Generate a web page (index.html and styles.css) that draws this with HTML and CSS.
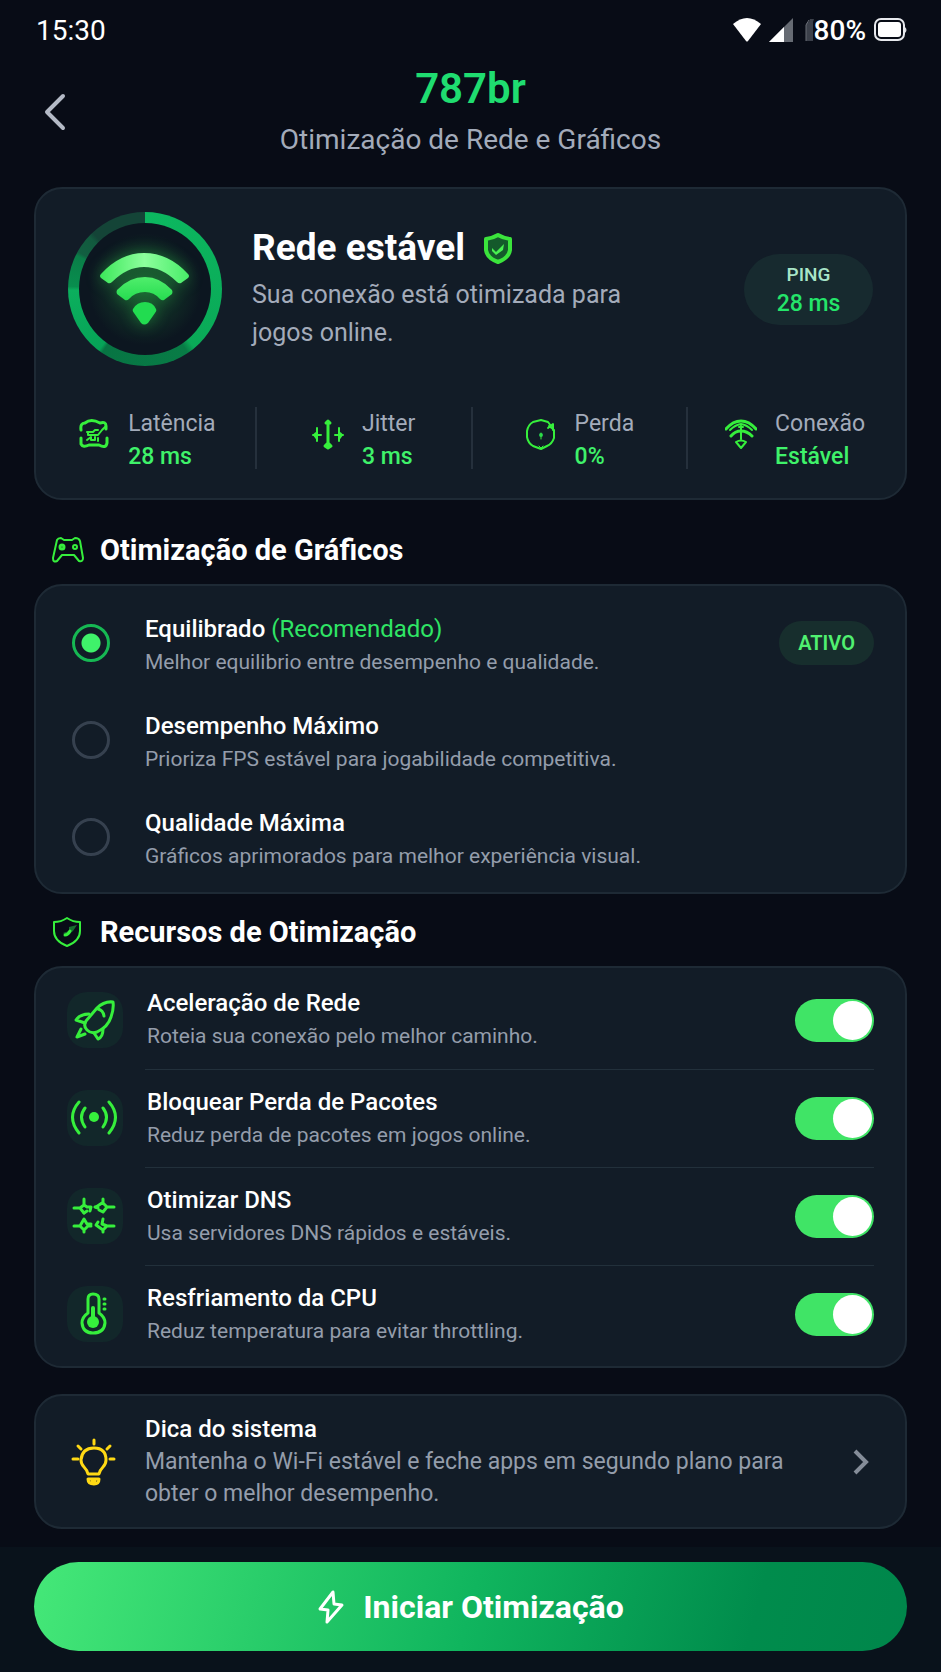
FILE: index.html
```html
<!DOCTYPE html>
<html lang="pt-BR">
<head>
  <meta charset="UTF-8" />
  <meta name="viewport" content="width=device-width, initial-scale=1.0"/>
  <title>787br</title>
  <meta name="theme-color" content="#070b14">
  <link rel="stylesheet" href="styles.css">
</head>
<body>
  <div class="status-bar">
    <span>15:30</span>
    <div class="status-icons">
      <svg class="status-wifi" width="30" height="26" viewBox="0 0 30 26"><path d="M1 7Q15-5 29 7L16 24Q15 25 14 24Z" fill="#fff"/></svg>
      <svg class="status-signal" width="24" height="24" viewBox="0 0 24 24"><path d="M0 24L24 0V24Z" fill="#666b73"/><path d="M0 24L15 9V24Z" fill="#fff"/></svg>
      <svg width="9" height="24" viewBox="0 0 9 24"><path d="M9 1L5 1L4 4Q1 4 1 7V23H8V4Z" fill="#3b404a"/><path d="M1 23V7L4 2" stroke="#686c75" fill="none"/></svg>
      <span>80%</span>
      <svg class="status-battery" width="33" height="24" viewBox="0 0 33 24"><rect x="1" y="1" width="29" height="21" rx="6" fill="none" stroke="#e8eaee" stroke-width="2"/><rect x="4" y="4" width="23" height="15" rx="3" fill="#fff"/><path d="M31 9Q34 12 31 15Z" fill="#dde0e5"/></svg>
    </div>
  </div>

  <header class="header">
    <button class="back" type="button" aria-label="Voltar">
      <svg width="24" height="38" viewBox="0 0 24 38"><path d="M20 3L4 19L20 35" fill="none" stroke="#b4bac6" stroke-width="4" stroke-linecap="round" stroke-linejoin="round"/></svg>
    </button>
    <div class="header-text">
      <h1>787br</h1>
      <p>Otimização de Rede e Gráficos</p>
    </div>
  </header>

  <main>
    <section class="card network">
      <div class="network-top">
        <div class="ring">
          <div class="ring-inner">
            <svg class="wifi" width="90" height="74" viewBox="0 0 90 74">
              <defs>
                <linearGradient id="wifi-top"><stop offset="0" stop-color="#3ce85a"/><stop offset="0.5" stop-color="#8dff9d"/><stop offset="1" stop-color="#48ec68"/></linearGradient>
                <linearGradient id="wifi-mid" x2="0" y2="1"><stop offset="0" stop-color="#50ee6c"/><stop offset="1" stop-color="#26dc50"/></linearGradient>
              </defs>
              <path d="M1 22Q20 1 44 1Q69 1 88 22Q90 24 88 26L81 31Q79 32 77 30Q62 15 44 15Q27 15 12 30Q10 32 8 31L1 26Q-1 24 1 22Z" fill="url(#wifi-top)"/>
              <path d="M17 38Q29 25 45 25Q60 25 72 38Q73 40 72 42L64 48Q62 49 60 47Q54 40 45 40Q35 40 29 47Q27 49 25 48L17 42Q16 40 17 38Z" fill="url(#wifi-mid)"/>
              <path d="M33 57Q37 50 45 50Q53 50 56 57Q57 59 55 61L48 71Q44 74 41 71L34 61Q32 59 33 57Z" fill="#22dc50"/>
            </svg>
          </div>
        </div>
        <div class="network-text">
          <h2>Rede estável
            <svg width="30" height="33" viewBox="0 0 30 33"><path d="M15 2Q20 5 28 6V18Q27 27 15 31Q3 27 2 18V6Q10 5 15 2Z" fill="#145a2b"/><path d="M15 3Q20 6 27 7V18Q26 26 15 30Q4 26 3 18V7Q10 6 15 3Z" fill="none" stroke="#3be43c" stroke-width="4" stroke-linejoin="round"/><path d="M9 16L13 20L21 12L20 18L13 23L9 19Z" fill="#48f050"/></svg>
          </h2>
          <p>Sua conexão está otimizada para jogos online.</p>
        </div>
        <div class="ping">
          <span>PING</span>
          <strong>28 ms</strong>
        </div>
      </div>
      <dl class="stats">
        <div class="stat">
          <svg width="32" height="32" viewBox="0 0 32 32" class="icon"><path d="M3 12Q2 5 7 5Q13 0 22 5Q28 3 28 8V11M3 20V26Q5 30 11 27H21Q28 31 29 25V20"/><path d="M9 14H15L17 12H20M10 17H20L24 12L27 9M9 22L13 19V22H17V19M20 20V23M10 14V17" stroke-width="2"/></svg>
          <div><dt>Latência</dt><dd>28 ms</dd></div>
        </div>
        <div class="stat">
          <svg width="32" height="32" viewBox="0 0 32 32" class="icon"><path d="M16 3V29M14 5L16 3L18 5M13 28L16 30L19 28L16 25Z"/><path d="M5 10V23M1 17H9M4 15L2 17L5 21M27 10V23M23 17H31M28 15L30 17L27 21" stroke-width="2"/></svg>
          <div><dt>Jitter</dt><dd>3 ms</dd></div>
        </div>
        <div class="stat">
          <svg width="32" height="32" viewBox="0 0 32 32" class="icon"><path d="M29 12V20Q27 26 22 28L16 31L8 28Q3 25 2 19V13Q3 7 8 4L16 2L23 4L26 8" stroke-width="2"/><path d="M23 10L28 6V12M24 8L28 11" stroke-width="2"/><circle cx="16" cy="17" r="2" fill="#25c850" stroke="none"/><path d="M16 15V21M14 28L16 30L18 28" stroke-width="1"/></svg>
          <div><dt>Perda</dt><dd>0%</dd></div>
        </div>
        <div class="stat">
          <svg width="32" height="32" viewBox="0 0 32 32" class="icon"><path d="M1 11Q8 3 16 3Q24 3 31 11M6 18Q10 13 16 13Q22 13 27 18"/><path d="M5 12Q10 7 16 6Q22 7 27 12M16 8V21M14 9H18M11 24Q16 21 21 24L16 30Z" stroke-width="2"/></svg>
          <div><dt>Conexão</dt><dd>Estável</dd></div>
        </div>
      </dl>
    </section>

    <h2 class="section-title">
      <svg width="34" height="28" viewBox="0 0 34 28" class="icon"><path d="M6 4Q7 2 10 2L13 4H21L24 2Q28 2 29 5L32 22Q32 26 28 25L23 19H11L6 25Q2 27 2 22Z" stroke-width="2"/><circle cx="11" cy="11" r="2"/><circle cx="24" cy="11" r="2" stroke-width="2"/></svg>
      Otimização de Gráficos
    </h2>
    <section class="card options">
      <label class="option">
        <input class="radio" type="radio" name="graficos" checked>
        <span class="option-text">
          <span class="item-title">Equilibrado <em>(Recomendado)</em></span>
          <span class="item-desc">Melhor equilibrio entre desempenho e qualidade.</span>
        </span>
        <span class="badge">ATIVO</span>
      </label>
      <label class="option">
        <input class="radio" type="radio" name="graficos">
        <span class="option-text">
          <span class="item-title">Desempenho Máximo</span>
          <span class="item-desc">Prioriza FPS estável para jogabilidade competitiva.</span>
        </span>
      </label>
      <label class="option">
        <input class="radio" type="radio" name="graficos">
        <span class="option-text">
          <span class="item-title">Qualidade Máxima</span>
          <span class="item-desc">Gráficos aprimorados para melhor experiência visual.</span>
        </span>
      </label>
    </section>

    <h2 class="section-title">
      <svg width="34" height="32" viewBox="0 0 34 32" class="icon"><path d="M16 2Q22 6 29 6V15Q29 25 16 30Q3 25 3 15V6Q10 6 16 2Z" stroke-width="2"/><path d="M18 11L26 9L22 15L16 20L12 17L18 15Z" fill="#17702f" stroke="none"/><path d="M14 19Q17 19 19 15" stroke-width="3"/></svg>
      Recursos de Otimização
    </h2>
    <section class="card features">
      <label class="feature">
        <span class="feature-icon">
          <svg width="56" height="56" viewBox="0 0 56 56" class="icon"><path d="M46 10Q37 9 30 16L19 29Q16 34 20 38Q24 42 30 40Q41 35 44 25Q47 17 46 10Z"/><path d="M31 17Q36 18 37 24M22 22Q13 22 9 28L18 31M27 41L31 47Q36 45 36 37M14 37L10 45L18 42"/></svg>
        </span>
        <span class="feature-body">
          <span class="option-text">
            <span class="item-title">Aceleração de Rede</span>
            <span class="item-desc">Roteia sua conexão pelo melhor caminho.</span>
          </span>
          <input class="switch" type="checkbox" checked>
        </span>
      </label>
      <label class="feature">
        <span class="feature-icon">
          <svg width="56" height="56" viewBox="0 0 56 56" class="icon"><path d="M12 12Q-1 27 12 43M18 18Q11 27 18 37M42 12Q55 27 42 43M36 18Q43 27 36 37"/><circle cx="27" cy="27" r="5" fill="#36ef3c" stroke="none"/></svg>
        </span>
        <span class="feature-body">
          <span class="option-text">
            <span class="item-title">Bloquear Perda de Pacotes</span>
            <span class="item-desc">Reduz perda de pacotes em jogos online.</span>
          </span>
          <input class="switch" type="checkbox" checked>
        </span>
      </label>
      <label class="feature">
        <span class="feature-icon">
          <svg width="56" height="56" viewBox="0 0 56 56" class="icon"><path d="M7 20H13L17 17V11M17 25L13 20M17 17L20 19H24L23 23M36 11V15L40 19H47M40 19L36 24L32 22M29 19L35 15M7 38H13L17 42V44M13 38L17 31L20 36H24M17 42L21 38H24M47 38H40L36 42V44M40 38L35 36L36 31M36 42L29 37L31 34"/><path d="M17 25L20 23M28 19L31 20"/></svg>
        </span>
        <span class="feature-body">
          <span class="option-text">
            <span class="item-title">Otimizar DNS</span>
            <span class="item-desc">Usa servidores DNS rápidos e estáveis.</span>
          </span>
          <input class="switch" type="checkbox" checked>
        </span>
      </label>
      <label class="feature">
        <span class="feature-icon">
          <svg width="56" height="56" viewBox="0 0 56 56" class="icon"><path d="M21 27V13Q21 8 26 8Q32 8 32 13V27Q38 31 38 37Q37 47 26 47Q16 47 15 37Q15 31 21 27Z"/><circle cx="26" cy="36" r="6" fill="#36ef3c" stroke="none"/><path d="M26 22V35" stroke-width="4"/><path d="M37 13H38M37 18H38M37 23H38"/></svg>
        </span>
        <span class="feature-body">
          <span class="option-text">
            <span class="item-title">Resfriamento da CPU</span>
            <span class="item-desc">Reduz temperatura para evitar throttling.</span>
          </span>
          <input class="switch" type="checkbox" checked>
        </span>
      </label>
    </section>

    <a class="card tip" href="#">
      <svg width="56" height="56" viewBox="0 0 56 56" class="icon icon-tip"><path d="M21 40Q20 36 17 33Q14 30 14 26Q15 14 27 14Q39 14 39 26Q39 30 36 33Q33 36 32 40Z"/><path d="M21 45H32Q32 50 27 50Q21 50 21 45ZM25 47H28M27 6V10M11 12L14 15M43 12L40 15M6 25H11M43 25H47"/></svg>
      <span class="tip-text">
        <span class="item-title">Dica do sistema</span>
        <span class="tip-desc">Mantenha o Wi-Fi estável e feche apps em segundo plano para obter o melhor desempenho.</span>
      </span>
      <svg width="20" height="28" viewBox="0 0 20 28"><path d="M4 3L15 14L4 25" fill="none" stroke="#858d99" stroke-width="4"/></svg>
    </a>
  </main>

  <footer class="footer">
    <button class="start" type="button">
      <svg width="28" height="36" viewBox="0 0 28 36"><path d="M16 3L3 20L11 21L10 33L25 16L17 15Z" fill="none" stroke="#fff" stroke-width="3" stroke-linejoin="round"/></svg>
      Iniciar Otimização
    </button>
  </footer>
</body>
</html>
```
FILE: styles.css
```css
:root {
  --verde: #3ff26a;
  --card: #121c27;
  --borda: #1e2a35;
  --texto: #a3abba;
}
* {
  box-sizing: border-box;
}
body {
  font-family: Roboto, 'Liberation Sans', sans-serif;
  background: #080c16;
  color: #fff;
  margin: 0;
  min-height: 100vh;
  display: flex;
  flex-direction: column;
}
h1, h2, p, dl, dd {
  margin: 0;
}
svg {
  display: block;
  flex-shrink: 0;
}
button {
  font-family: inherit;
  cursor: pointer;
}
.icon {
  fill: none;
  stroke: #36ef3c;
  stroke-width: 3;
  stroke-linecap: round;
  stroke-linejoin: round;
}
.status-bar {
  display: flex;
  justify-content: space-between;
  align-items: center;
  padding: 12px 34px 0 36px;
  height: 48px;
  font-size: 28px;
}
.status-icons {
  display: flex;
  align-items: center;
  font-weight: 500;
}
.status-signal {
  margin: 0 12px 0 7px;
}
.status-battery {
  margin-left: 8px;
}
.header {
  display: grid;
  grid-template-columns: 40px 1fr 40px;
  align-items: center;
  padding: 17px 34px 29px;
}
.back {
  background: none;
  border: none;
  padding: 0 9px;
}
.header-text {
  text-align: center;
}
.header h1 {
  font-size: 42px;
  line-height: 48px;
  font-weight: 600;
  color: #1fdd70;
}
.header p {
  font-size: 28px;
  line-height: 36px;
  margin-top: 9px;
  color: var(--texto);
}
main {
  padding: 0 34px 18px;
}
.card {
  background: var(--card);
  border: 2px solid var(--borda);
  border-radius: 28px;
}
.network {
  padding: 23px 3px 29px;
}
.network-top {
  display: flex;
  align-items: center;
  padding: 0 29px;
}
.ring {
  width: 154px;
  height: 154px;
  padding: 11px;
  border-radius: 50%;
  flex-shrink: 0;
  background: conic-gradient(#0cb860, #0aa957 140deg, #087c46 146deg, #077443 214deg, #06a357 217deg, #0baf5d 269deg, #088e4e 272deg, #0a7e48 296deg, #125f41 299deg, #125a3e 313deg, #144437 317deg, #144437);
}
.ring-inner {
  width: 100%;
  height: 100%;
  border-radius: 50%;
  background: radial-gradient(#15452b, #0c1620 60%);
  display: flex;
  align-items: center;
  justify-content: center;
}
.wifi {
  filter: drop-shadow(0 0 8px rgba(50, 230, 80, 0.4));
}
.network-text {
  flex: 1;
  padding: 0 90px 0 30px;
}
.network-text h2 {
  display: flex;
  align-items: center;
  gap: 18px;
  font-size: 37px;
  line-height: 44px;
}
.network-text p {
  font-size: 25px;
  line-height: 38px;
  margin-top: 6px;
  color: var(--texto);
}
.ping {
  width: 129px;
  height: 71px;
  border-radius: 36px;
  background: #172a2f;
  display: flex;
  flex-direction: column;
  align-items: center;
  justify-content: center;
  font-size: 19px;
  line-height: 29px;
  font-weight: 500;
  color: #a8e5c8;
  flex-shrink: 0;
}
.ping strong {
  font-size: 23px;
  font-weight: 500;
  color: #24e56a;
}
.stats {
  display: grid;
  grid-template-columns: repeat(4, 1fr);
  margin-top: 41px;
}
.stat {
  display: flex;
  justify-content: center;
  gap: 18px;
  height: 62px;
}
.stat + .stat {
  border-left: 2px solid #25303c;
}
.stat svg {
  margin-top: 11px;
}
.stat dt,
.stat dd {
  font-size: 23px;
  line-height: 33px;
}
.stat dt {
  color: var(--texto);
}
.stat dd {
  font-weight: 500;
  color: var(--verde);
}
.section-title {
  display: flex;
  align-items: center;
  gap: 15px;
  padding: 0 17px;
  margin: 30px 0 14px;
  font-size: 29px;
  line-height: 40px;
}
.options + .section-title {
  margin-top: 18px;
}
.options {
  padding: 8px 31px 7px;
}
.option {
  display: flex;
  align-items: center;
  height: 97px;
  cursor: pointer;
}
.option .option-text {
  padding-top: 6px;
}
.radio {
  appearance: none;
  width: 38px;
  height: 38px;
  margin: 0 35px 0 5px;
  border: 3px solid #36414f;
  border-radius: 50%;
  flex-shrink: 0;
}
.radio:checked {
  border-color: #16b853;
  background: radial-gradient(#3ff26a 9px, transparent 10px);
}
.option-text {
  flex: 1;
}
.item-title,
.item-desc {
  display: block;
  line-height: 33px;
}
.item-title {
  font-size: 24px;
  font-weight: 500;
  color: #fff;
}
.item-title em {
  font-style: normal;
  font-weight: 400;
  color: #2fe565;
}
.item-desc {
  font-size: 21px;
  color: #949dab;
}
.badge {
  padding: 0 19px;
  border-radius: 22px;
  background: #172e2d;
  color: #50f070;
  font-size: 20px;
  line-height: 44px;
  font-weight: 600;
}
.features {
  padding: 3px 31px;
}
.feature {
  display: flex;
  align-items: center;
  gap: 22px;
  cursor: pointer;
}
.feature-icon {
  width: 56px;
  height: 56px;
  border-radius: 20px;
  background: #12272a;
  flex-shrink: 0;
}
.feature-body {
  flex: 1;
  display: flex;
  align-items: center;
  height: 98px;
  padding-left: 2px;
}
.feature + .feature .feature-body {
  border-top: 1px solid #22303b;
}
.switch {
  appearance: none;
  width: 79px;
  height: 43px;
  margin: 0;
  padding: 2px;
  border-radius: 22px;
  background: #36414f;
  display: flex;
}
.switch::before {
  content: '';
  width: 39px;
  height: 39px;
  border-radius: 50%;
  background: #fff;
}
.switch:checked {
  justify-content: flex-end;
  background: #40e466;
}
.tip {
  display: flex;
  align-items: center;
  margin-top: 26px;
  padding: 17px 34px 17px 31px;
  text-decoration: none;
}
.icon-tip {
  stroke: #ffd914;
}
.tip-text {
  flex: 1;
  padding: 0 60px 0 22px;
}
.tip-desc {
  display: block;
  font-size: 23px;
  line-height: 32px;
  color: #949dab;
}
.footer {
  margin-top: auto;
  padding: 15px 34px 21px;
  background: #09121b;
}
.start {
  width: 100%;
  height: 89px;
  border: none;
  border-radius: 45px;
  background: linear-gradient(105deg, #45e878, #10b55e 50%, #008c4c 82%, #00864b);
  color: #fff;
  font-size: 32px;
  font-weight: 700;
  display: flex;
  align-items: center;
  justify-content: center;
  gap: 18px;
}
```
